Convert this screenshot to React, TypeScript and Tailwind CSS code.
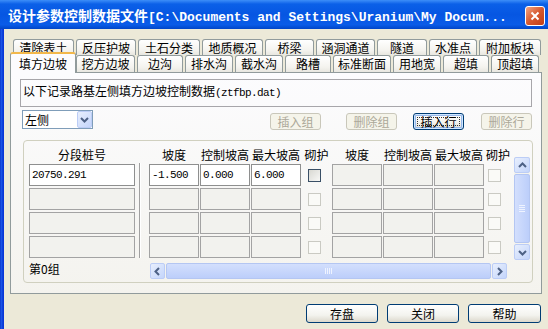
import React from 'react'

type Dir = 'up' | 'down' | 'left' | 'right'

const mono = "font-['Liberation_Mono',monospace] text-[11px] tracking-[-0.6px]"

const row1 = [
  { label: '清除表土', w: 'w-[61px]' },
  { label: '反压护坡', w: 'w-[60px]' },
  { label: '土石分类', w: 'w-[62px]' },
  { label: '地质概况', w: 'w-[61px]' },
  { label: '桥梁', w: 'w-[49px]' },
  { label: '涵洞通道', w: 'w-[59px]' },
  { label: '隧道', w: 'w-[50px]' },
  { label: '水准点', w: 'w-[48px]' },
  { label: '附加板块', w: 'w-[62px]' },
]

const row2 = [
  { label: '挖方边坡', w: 'w-[59px]' },
  { label: '边沟', w: 'w-[46px]' },
  { label: '排水沟', w: 'w-[48px]' },
  { label: '截水沟', w: 'w-[48px]' },
  { label: '路槽', w: 'w-[46px]' },
  { label: '标准断面', w: 'w-[58px]' },
  { label: '用地宽', w: 'w-[48px]' },
  { label: '超填', w: 'w-[46px]' },
  { label: '顶超填', w: 'w-[48px]' },
]

function Tab({ label, w }: { label: string; w: string }) {
  return (
    <div
      className={`${w} h-full border border-b-0 border-[#919b9c] rounded-t-[3px] bg-[linear-gradient(180deg,#ffffff,#f4f3ee_70%,#e8e7e0)] flex items-center justify-center leading-none`}
    >
      {label}
    </div>
  )
}

function Chevron({ dir }: { dir: Dir }) {
  const pts =
    dir === 'up'
      ? '1,6 4.5,2.5 8,6'
      : dir === 'down'
        ? '1,3 4.5,6.5 8,3'
        : dir === 'left'
          ? '6,1 2.5,4.5 6,8'
          : '3,1 6.5,4.5 3,8'
  return (
    <svg width="9" height="9" viewBox="0 0 9 9">
      <polyline points={pts} fill="none" stroke="#4d6185" strokeWidth="2" />
    </svg>
  )
}

function ScrollBtn({ dir, className = '' }: { dir: Dir; className?: string }) {
  return (
    <div
      className={`${className} rounded-[2px] border border-[#bccdf6] bg-[linear-gradient(135deg,#e8effd,#c4d5fb)] flex items-center justify-center`}
    >
      <Chevron dir={dir} />
    </div>
  )
}

function XpButton({
  children,
  className = '',
  disabled,
  focused,
}: {
  children: React.ReactNode
  className?: string
  disabled?: boolean
  focused?: boolean
}) {
  if (disabled) {
    return (
      <div
        className={`${className} rounded-[3px] border border-[#c9c7ba] bg-[#f5f4ea] text-[#aca899] flex items-center justify-center leading-none`}
      >
        {children}
      </div>
    )
  }
  return (
    <div
      className={`${className} rounded-[3px] border border-[#003c74] bg-[linear-gradient(180deg,#ffffff,#f3f3ee_60%,#dcd8cc)] flex items-center justify-center leading-none ${
        focused ? 'shadow-[inset_0_0_0_1px_#cee7ff,inset_0_0_0_2px_#98b8ea]' : ''
      }`}
    >
      {focused ? (
        <span className="flex items-center justify-center w-[calc(100%-6px)] h-[calc(100%-6px)] border border-dotted border-[#333]">
          {children}
        </span>
      ) : (
        children
      )}
    </div>
  )
}

function Cell({ text, active }: { text?: string; active?: boolean }) {
  return (
    <div
      className={`w-[50px] h-full border flex items-center pl-[2px] ${mono} ${
        active ? 'border-[#8e8f8f] bg-white' : 'border-[#a3a3a3] bg-[#f2f2ee]'
      }`}
    >
      {text}
    </div>
  )
}

function Check({ active }: { active?: boolean }) {
  return (
    <div
      className={`w-[13px] h-[13px] border ${
        active
          ? 'border-[#3a4f66] bg-[linear-gradient(135deg,#d8d8d2,#f8f8f6)]'
          : 'border-[#cacac3] bg-[#fafaf7]'
      }`}
    />
  )
}

const rows = [
  { zh: '20750.291', a: '-1.500', b: '0.000', c: '6.000' },
  { zh: '' },
  { zh: '' },
  { zh: '' },
]

export default function App() {
  return (
    <div className="w-[548px] h-[329px] overflow-hidden bg-[#ece9d8] flex flex-col text-[12px] text-black font-['Noto_Sans_CJK_SC','Noto_Sans',sans-serif]">
      {/* Title bar */}
      <div className="h-[29px] shrink-0 flex items-center pt-[3px] pl-[8px] pr-[3px] bg-[linear-gradient(180deg,#3d8ef8_0%,#0b60e8_14%,#0656e2_50%,#0a5ce8_85%,#0045c8_100%)]">
        <span className="text-white font-bold font-['Liberation_Mono','Noto_Sans_CJK_SC',monospace] text-[13px] leading-none whitespace-nowrap">
          <span className="text-[14px] font-['Noto_Sans_CJK_SC',sans-serif]">设计参数控制数据文件</span>
          [C:\Documents and Settings\Uranium\My Docum...
        </span>
        <div className="ml-auto w-[20px] h-[20px] rounded-[3px] border border-white bg-[linear-gradient(135deg,#f2a584,#d6582f_50%,#c23d14)] flex items-center justify-center">
          <svg width="10" height="10" viewBox="0 0 10 10">
            <path d="M1.5 1.5 L8.5 8.5 M8.5 1.5 L1.5 8.5" stroke="white" strokeWidth="2" />
          </svg>
        </div>
      </div>

      {/* Body */}
      <div className="flex-1 flex">
        <div className="w-[4px] bg-[linear-gradient(90deg,#0a36c8,#1c55e8,#0b40d8,#0831d9)]" />
        <div className="flex-1 flex flex-col pl-[6px] pt-[10px]">
          {/* tab rows */}
          <div className="flex h-[16px] gap-[2px] pl-[3px]">
            {row1.map(t => (
              <Tab key={t.label} label={t.label} w={t.w} />
            ))}
          </div>
          <div className="flex h-[17px] gap-[2px] pl-[2px] items-end">
            <div className="relative z-10 w-[66px] h-[21px] -mx-[2px] -mb-[1px] border border-b-0 border-[#919b9c] border-t-[2px] border-t-[#f2b84b] rounded-t-[3px] bg-[#fcfcfe] flex items-center justify-center leading-none">
              填方边坡
            </div>
            {row2.map(t => (
              <Tab key={t.label} label={t.label} w={t.w} />
            ))}
          </div>

          {/* tab panel */}
          <div className="w-[532px] h-[222px] border border-[#919b9c] bg-[linear-gradient(180deg,#fcfcfe,#f4f3ee)] pl-[9px] pt-[6px] flex flex-col">
            <div className="w-[512px] h-[28px] border border-[#a7a6aa] pl-[2px] pt-[4px] leading-[14px] whitespace-nowrap">
              以下记录路基左侧填方边坡控制数据<span className={mono}>(ztfbp.dat)</span>
            </div>

            <div className="mt-[3px] h-[20px] flex items-start">
              <div className="ml-[2px] w-[71px] h-[19px] border border-[#7f9db9] bg-white flex items-center">
                <span className="pl-[2px] leading-none">左侧</span>
                <ScrollBtn dir="down" className="ml-auto w-[15px] h-[17px]" />
              </div>
              <XpButton disabled className="ml-[177px] mt-[3px] w-[51px] h-[17px]">插入组</XpButton>
              <XpButton disabled className="ml-[25px] mt-[3px] w-[51px] h-[17px]">删除组</XpButton>
              <XpButton focused className="ml-[16px] mt-[3px] w-[51px] h-[17px]">插入行</XpButton>
              <XpButton disabled className="ml-[17px] mt-[3px] w-[51px] h-[17px]">删除行</XpButton>
            </div>

            {/* grid group */}
            <div className="ml-[3px] mt-[10px] w-[510px] h-[143px] border border-[#d0d0bf] rounded-[4px] flex">
              <div className="ml-[5px] w-[106px] flex flex-col">
                <div className="mt-[7px] h-[14px] leading-[14px] text-center">分段桩号</div>
                <div className="mt-[2px] flex flex-col gap-[2px]">
                  {rows.map((r, i) => (
                    <div
                      key={i}
                      className={`h-[22px] border flex items-center pl-[2px] ${mono} ${
                        i === 0 ? 'border-[#8e8f8f] bg-white' : 'border-[#a3a3a3] bg-[#f2f2ee]'
                      }`}
                    >
                      {r.zh}
                    </div>
                  ))}
                </div>
                <div className="mt-[4px] h-[14px] leading-[14px]">第0组</div>
              </div>

              <div className="ml-[4px] mt-[22px] w-[2px] h-[95px] border-l border-l-[#a0a0a0] border-r border-r-white" />

              <div className="ml-[8px] flex flex-col">
                <div className="mt-[7px] h-[14px] leading-[14px] flex text-center whitespace-nowrap">
                  <div className="w-[50px]">坡度</div>
                  <div className="ml-[1px] w-[50px]">控制坡高</div>
                  <div className="ml-[1px] w-[50px]">最大坡高</div>
                  <div className="w-[31px]">砌护</div>
                  <div className="w-[50px]">坡度</div>
                  <div className="ml-[1px] w-[50px]">控制坡高</div>
                  <div className="ml-[1px] w-[50px]">最大坡高</div>
                  <div className="ml-[2px] w-[24px]">砌护</div>
                </div>
                <div className="mt-[2px] flex flex-col gap-[2px]">
                  {rows.map((r, i) => (
                    <div key={i} className="h-[22px] flex items-center">
                      <Cell text={r.a} active={i === 0} />
                      <div className="ml-[1px] h-full"><Cell text={r.b} active={i === 0} /></div>
                      <div className="ml-[1px] h-full"><Cell text={r.c} active={i === 0} /></div>
                      <div className="ml-[7px]"><Check active={i === 0} /></div>
                      <div className="ml-[11px] h-full"><Cell /></div>
                      <div className="ml-[1px] h-full"><Cell /></div>
                      <div className="ml-[1px] h-full"><Cell /></div>
                      <div className="ml-[4px]"><Check /></div>
                    </div>
                  ))}
                </div>
                {/* horizontal scrollbar */}
                <div className="mt-[5px] ml-[1px] w-[357px] h-[16px] bg-[#f4f3ee] flex">
                  <ScrollBtn dir="left" className="w-[15px] h-full" />
                  <div className="flex-1 px-[1px]">
                    <div className="h-full rounded-[2px] border border-[#b4c6f2] bg-[linear-gradient(180deg,#d3dffd,#bccefa)] flex items-center justify-center gap-[1px]">
                      <div className="w-[1px] h-[6px] bg-[#eef3ff]" />
                      <div className="w-[1px] h-[6px] bg-[#eef3ff]" />
                      <div className="w-[1px] h-[6px] bg-[#eef3ff]" />
                      <div className="w-[1px] h-[6px] bg-[#eef3ff]" />
                    </div>
                  </div>
                  <ScrollBtn dir="right" className="w-[15px] h-full" />
                </div>
              </div>

              {/* vertical scrollbar */}
              <div className="ml-[4px] mt-[16px] w-[16px] h-[103px] bg-[#f4f3ee] flex flex-col">
                <ScrollBtn dir="up" className="h-[16px] w-full" />
                <div className="flex-1 py-[1px]">
                  <div className="h-full rounded-[2px] border border-[#b4c6f2] bg-[linear-gradient(90deg,#d3dffd,#bccefa)] flex flex-col items-center justify-center gap-[1px]">
                    <div className="w-[6px] h-[1px] bg-[#eef3ff]" />
                    <div className="w-[6px] h-[1px] bg-[#eef3ff]" />
                    <div className="w-[6px] h-[1px] bg-[#eef3ff]" />
                    <div className="w-[6px] h-[1px] bg-[#eef3ff]" />
                  </div>
                </div>
                <ScrollBtn dir="down" className="h-[16px] w-full" />
              </div>
            </div>
          </div>

          {/* bottom buttons */}
          <div className="mt-[10px] flex justify-end pr-[7px] gap-[9px]">
            <XpButton className="w-[72px] h-[19px]">存盘</XpButton>
            <XpButton className="w-[72px] h-[19px]">关闭</XpButton>
            <XpButton className="w-[73px] h-[19px]">帮助</XpButton>
          </div>
        </div>
      </div>
    </div>
  )
}
